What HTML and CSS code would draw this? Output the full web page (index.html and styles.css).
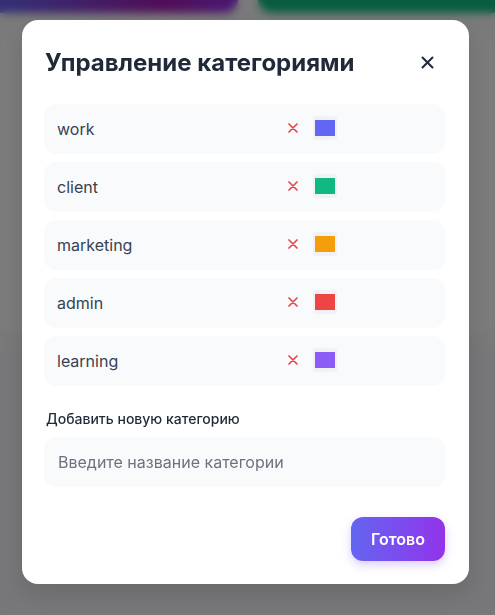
FILE: index.html
```html
<!DOCTYPE html>
<html lang="ru">
<head>
<meta charset="utf-8">
<title>Управление категориями</title>
<link rel="stylesheet" href="styles.css">
</head>
<body>
<div class="page">
  <div class="page-head">
    <div class="hero hero-purple"></div>
    <div class="hero hero-green"></div>
  </div>
  <div class="page-panel"></div>
  <div class="page-panel page-panel-2"></div>
</div>

<div class="overlay">
  <div class="modal">
    <div class="modal-head">
      <h2 class="modal-title">Управление категориями</h2>
      <button class="close-btn" type="button" aria-label="Закрыть">
        <svg width="13" height="13" viewBox="0 0 13 13"><path d="M1.5 1.5 L11.5 11.5 M11.5 1.5 L1.5 11.5" stroke="#1f2937" stroke-width="2" stroke-linecap="round" fill="none"/></svg>
      </button>
    </div>

    <div class="cat-list">
      <div class="cat-row">
        <span class="cat-name">work</span>
        <button class="del-btn" type="button"><svg width="10" height="10" viewBox="0 0 10 10"><path d="M1 1 L9 9 M9 1 L1 9" stroke="#e5484d" stroke-width="1.7" stroke-linecap="round" fill="none"/></svg></button>
        <span class="swatch"><span class="swatch-fill c-work"></span></span>
      </div>
      <div class="cat-row">
        <span class="cat-name">client</span>
        <button class="del-btn" type="button"><svg width="10" height="10" viewBox="0 0 10 10"><path d="M1 1 L9 9 M9 1 L1 9" stroke="#e5484d" stroke-width="1.7" stroke-linecap="round" fill="none"/></svg></button>
        <span class="swatch"><span class="swatch-fill c-client"></span></span>
      </div>
      <div class="cat-row">
        <span class="cat-name">marketing</span>
        <button class="del-btn" type="button"><svg width="10" height="10" viewBox="0 0 10 10"><path d="M1 1 L9 9 M9 1 L1 9" stroke="#e5484d" stroke-width="1.7" stroke-linecap="round" fill="none"/></svg></button>
        <span class="swatch"><span class="swatch-fill c-marketing"></span></span>
      </div>
      <div class="cat-row">
        <span class="cat-name">admin</span>
        <button class="del-btn" type="button"><svg width="10" height="10" viewBox="0 0 10 10"><path d="M1 1 L9 9 M9 1 L1 9" stroke="#e5484d" stroke-width="1.7" stroke-linecap="round" fill="none"/></svg></button>
        <span class="swatch"><span class="swatch-fill c-admin"></span></span>
      </div>
      <div class="cat-row">
        <span class="cat-name">learning</span>
        <button class="del-btn" type="button"><svg width="10" height="10" viewBox="0 0 10 10"><path d="M1 1 L9 9 M9 1 L1 9" stroke="#e5484d" stroke-width="1.7" stroke-linecap="round" fill="none"/></svg></button>
        <span class="swatch"><span class="swatch-fill c-learning"></span></span>
      </div>
    </div>

    <label class="add-label" for="newcat">Добавить новую категорию</label>
    <input class="add-input" id="newcat" type="text" placeholder="Введите название категории">

    <div class="modal-foot">
      <button class="done-btn" type="button">Готово</button>
    </div>
  </div>
</div>
</body>
</html>
```

FILE: styles.css
```css
* { box-sizing: border-box; }

html, body {
  margin: 0;
  padding: 0;
  height: 100%;
}

body {
  background: #f4f4f5;
  font-family: Inter, "Noto Sans", "Liberation Sans", sans-serif;
  overflow: hidden;
}

/* background page (under the overlay) */
.page {
  width: 515px;
  margin-left: -10px;
}

.page-head {
  display: grid;
  grid-template-columns: 1fr 1fr;
  gap: 20px;
  margin-top: -30px;
}

.hero {
  height: 43px;
  border-radius: 14px;
}

.hero-purple {
  background: linear-gradient(90deg, #6366f1, #a21caf 70%, #9333ea);
}

.hero-green {
  background: #10b981;
}

.page-panel {
  margin: 22px 10px 0 10px;
  height: 300px;
  background: #f7f7f8;
  border-radius: 12px;
  box-shadow: 0 2px 6px rgba(0,0,0,0.06);
}

.page-panel-2 {
  margin-top: 12px;
  background: #eeeff3;
  height: 260px;
}

/* overlay */
.overlay {
  position: fixed;
  inset: 0;
  background: rgba(0, 0, 0, 0.5);
  backdrop-filter: blur(4px);
  display: flex;
  align-items: flex-start;
  padding: 20px 0 0 22px;
}

.modal {
  width: 447px;
  background: #ffffff;
  border-radius: 16px;
  padding: 24px 24px 23px 22px;
  box-shadow: 0 10px 25px rgba(0, 0, 0, 0.12);
  display: flex;
  flex-direction: column;
}

.modal-head {
  display: flex;
  align-items: center;
  justify-content: space-between;
  height: 36px;
  margin-bottom: 24px;
}

.modal-title {
  margin: 0 0 0 1px;
  font-size: 24px;
  font-weight: 700;
  color: #1f2937;
}

.close-btn {
  width: 36px;
  height: 36px;
  border: none;
  background: transparent;
  padding: 0;
  display: flex;
  align-items: center;
  justify-content: center;
  cursor: pointer;
}

.cat-list {
  display: flex;
  flex-direction: column;
  gap: 8px;
  margin-bottom: 23px;
}

.cat-row {
  display: flex;
  align-items: center;
  height: 50px;
  padding: 0 12px;
  background: #f9fafb;
  border-radius: 12px;
  gap: 9px;
}

.cat-name {
  flex: 0 0 216px;
  font-size: 16px;
  color: #374151;
  margin-left: 1px;
}

.del-btn {
  width: 22px;
  height: 22px;
  margin-top: -2px;
  border: none;
  background: transparent;
  padding: 0;
  display: flex;
  align-items: center;
  justify-content: center;
  cursor: pointer;
}

.swatch {
  width: 24px;
  height: 24px;
  margin-top: -2px;
  padding: 4px 2px;
  background: #f1f2f5;
  border-radius: 3px;
  display: block;
}

.swatch-fill {
  display: block;
  width: 100%;
  height: 100%;
}

.c-work { background: #6366f1; }
.c-client { background: #10b981; }
.c-marketing { background: #f59e0b; }
.c-admin { background: #ef4444; }
.c-learning { background: #8b5cf6; }

.add-label {
  display: block;
  margin-left: 2px;
  font-size: 14px;
  line-height: 20px;
  font-weight: 500;
  color: #1f2937;
  margin-bottom: 8px;
}

.add-input {
  height: 50px;
  width: 100%;
  border: none;
  border-radius: 12px;
  background: #f9fafb;
  padding: 0 14px;
  font-family: inherit;
  font-size: 16px;
  color: #1f2937;
  outline: none;
}

.add-input::placeholder {
  color: #6b7280;
}

.modal-foot {
  display: flex;
  justify-content: flex-end;
  margin-top: 30px;
}

.done-btn {
  width: 94px;
  height: 44px;
  border: none;
  border-radius: 12px;
  background: linear-gradient(90deg, #6366f1, #9333ea);
  color: #ffffff;
  font-family: inherit;
  font-size: 16px;
  font-weight: 600;
  box-shadow: 0 4px 10px rgba(124, 58, 237, 0.25);
  cursor: pointer;
}
```
